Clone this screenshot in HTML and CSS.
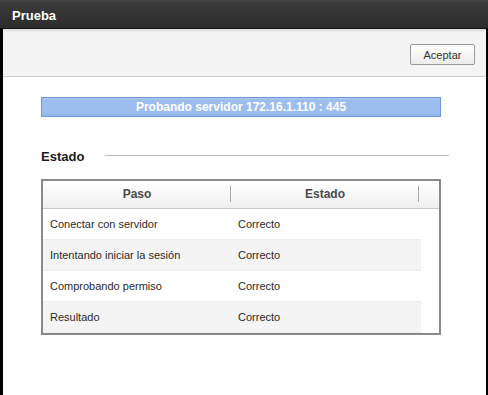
FILE: index.html
```html
<html>
    <head>
        <title>Prueba</title>
        <meta charset="utf-8">
        <link rel="stylesheet" href="styles.css">
    </head>
    <body>
        <div class="window">
            <div class="titlebar">Prueba</div>
            <div class="frame">
                <div class="toolbar">
                    <button class="btn" type="button">Aceptar</button>
                </div>
                <div class="content">
                    <div class="progress">Probando servidor 172.16.1.110 : 445</div>

                    <div class="section">
                        <span class="section-title">Estado</span>
                        <span class="section-line"></span>
                    </div>

                    <div class="grid">
                        <div class="grid-head">
                            <div class="col">Paso</div>
                            <div class="col">Estado</div>
                            <div class="head-pad"></div>
                        </div>
                        <div class="grid-body">
                            <div class="rows">
                                <div class="row">
                                    <div class="cell">Conectar con servidor</div>
                                    <div class="cell">Correcto</div>
                                </div>
                                <div class="row alt">
                                    <div class="cell">Intentando iniciar la sesión</div>
                                    <div class="cell">Correcto</div>
                                </div>
                                <div class="row">
                                    <div class="cell">Comprobando permiso</div>
                                    <div class="cell">Correcto</div>
                                </div>
                                <div class="row alt">
                                    <div class="cell">Resultado</div>
                                    <div class="cell">Correcto</div>
                                </div>
                            </div>
                            <div class="scroll-space"></div>
                        </div>
                    </div>
                </div>
            </div>
        </div>
    </body>
</html>
```

FILE: styles.css
```css
html,
body {
    margin: 0;
    width: 100%;
    height: 100%;
    background-color: black;
    font-family: "Liberation Sans", Arial, sans-serif;
}
.window {
    display: flex;
    flex-direction: column;
    height: 100%;
}
.titlebar {
    height: 29px;
    padding-left: 12px;
    line-height: 32px;
    font-size: 13px;
    font-weight: bold;
    color: white;
    background: linear-gradient(#444 0px, #3b3b3b 3px, #2c2c2c 100%);
    border-bottom: 1px solid #111;
    box-sizing: border-box;
}
.frame {
    flex: 1;
    margin-left: 3px;
    margin-right: 2px;
    background-color: white;
}
.toolbar {
    display: flex;
    justify-content: flex-end;
    height: 48px;
    padding: 15px 11px 0 0;
    box-sizing: border-box;
    background: linear-gradient(#dcdcdc 0px, #f4f4f4 4px, #f4f4f4 100%);
    border-bottom: 1px solid #cfcfcf;
}
.btn {
    width: 65px;
    height: 21px;
    padding: 0;
    border: solid 1px #9a9a9a;
    border-radius: 2px;
    background: linear-gradient(#ffffff, #ececec);
    color: #333;
    font-family: "Liberation Sans", Arial, sans-serif;
    font-size: 11px;
}
.content {
    padding: 20px 0 0 38px;
}
.progress {
    width: 400px;
    height: 20px;
    box-sizing: border-box;
    border: solid 1px #6d9ad8;
    background: linear-gradient(#aecbf3 0px, #9cbeee 2px, #9cbeee 80%, #8fb2e6 100%);
    color: white;
    font-size: 12px;
    font-weight: bold;
    text-align: center;
    line-height: 18px;
}
.section {
    display: flex;
    align-items: center;
    width: 408px;
    margin-top: 31px;
    height: 16px;
}
.section-title {
    font-size: 13px;
    font-weight: bold;
    color: #1a1a1a;
}
.section-line {
    flex: 1;
    margin-left: 21px;
    border-top: 1px solid #bcbcbc;
    margin-top: -2px;
}
.grid {
    width: 400px;
    margin-top: 15px;
    box-sizing: border-box;
    border: solid 2px #8a8a8a;
}
.grid-head {
    display: flex;
    height: 28px;
    box-sizing: border-box;
    border-bottom: 1px solid #cacaca;
    background: linear-gradient(#ffffff, #f0f0f0);
    font-size: 12px;
    font-weight: bold;
    color: #4a4a4a;
}
.grid-head .col {
    width: 188px;
    text-align: center;
    line-height: 27px;
    position: relative;
}
.grid-head .col::after {
    content: "";
    position: absolute;
    right: 0;
    top: 5px;
    height: 16px;
    border-right: 1px solid #aaa;
}
.head-pad {
    flex: 1;
}
.grid-body {
    display: flex;
}
.rows {
    width: 378px;
}
.scroll-space {
    flex: 1;
}
.row {
    display: flex;
    height: 31px;
    box-sizing: border-box;
    border-bottom: 1px solid #ececec;
    background-color: white;
    font-size: 11px;
    color: #2a2a2a;
    line-height: 31px;
}
.row.alt {
    background-color: #f4f4f4;
}
.cell {
    width: 188px;
    padding-left: 7px;
    box-sizing: border-box;
}
```
